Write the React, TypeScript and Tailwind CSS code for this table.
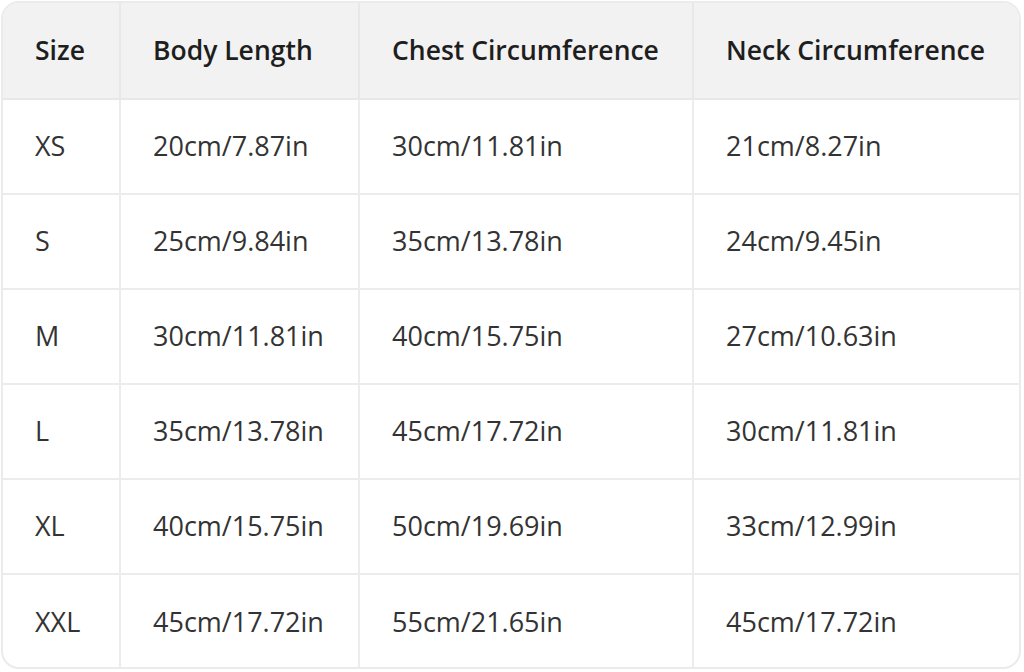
import React from 'react'

const rows = [
    ["XS", "20cm/7.87in", "30cm/11.81in", "21cm/8.27in"],
    ["S", "25cm/9.84in", "35cm/13.78in", "24cm/9.45in"],
    ["M", "30cm/11.81in", "40cm/15.75in", "27cm/10.63in"],
    ["L", "35cm/13.78in", "45cm/17.72in", "30cm/11.81in"],
    ["XL", "40cm/15.75in", "50cm/19.69in", "33cm/12.99in"],
    ["XXL", "45cm/17.72in", "55cm/21.65in", "45cm/17.72in"],
]

const heads = ["Size", "Body Length", "Chest Circumference", "Neck Circumference"]

export default function App() {
    return (
        <div className="w-[1024px] h-[672px] bg-white p-[1px]" style={{ fontFamily: '"Open Sans", "Noto Sans", sans-serif' }}>
            <div className="w-[1020px] h-[668px] border-2 border-[#ebebeb] rounded-[18px] overflow-hidden">
                <table className="w-full h-full border-collapse table-fixed">
                    <colgroup>
                        <col className="w-[117px]" />
                        <col className="w-[239px]" />
                        <col className="w-[334px]" />
                        <col />
                    </colgroup>
                    <thead>
                        <tr className="bg-[#f2f2f2] h-[96px]">
                            {heads.map((h, i) => (
                                <th key={h} className={`text-left font-semibold text-[26.5px] text-[#1e1e1e] pl-[32px] border-b-2 border-[#e8e8e8] ${i < 3 ? 'border-r-2' : ''}`}>
                                    {h}
                                </th>
                            ))}
                        </tr>
                    </thead>
                    <tbody>
                        {rows.map((r, ri) => (
                            <tr key={r[0]} className="h-[95px]">
                                {r.map((c, i) => (
                                    <td key={i} className={`text-[27px] text-[#333333] pl-[32px] border-[#ececec] ${i < 3 ? 'border-r-2' : ''} ${ri < 5 ? 'border-b-2' : ''}`}>
                                        {c}
                                    </td>
                                ))}
                            </tr>
                        ))}
                    </tbody>
                </table>
            </div>
        </div>
    )
}
